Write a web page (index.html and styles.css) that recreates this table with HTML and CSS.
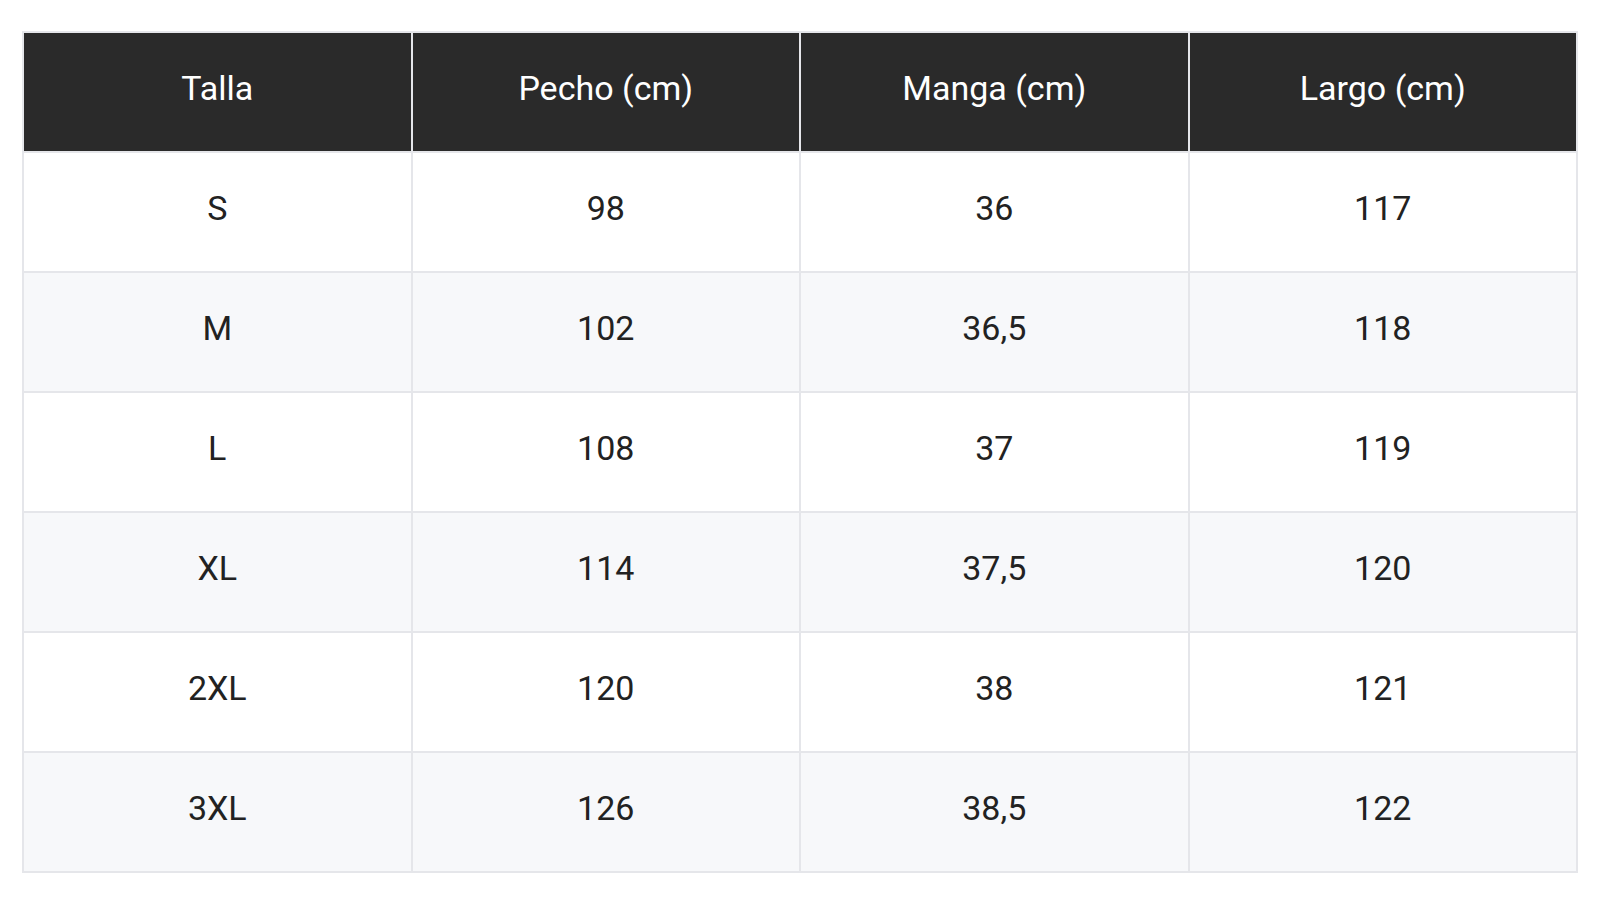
FILE: index.html
```html
<!DOCTYPE html>
<html lang="es">
<head>
<meta charset="utf-8">
<title>Tabla de tallas</title>
<link rel="stylesheet" href="styles.css">
</head>
<body>
<div class="wrap">
<table class="sizes">
  <thead>
    <tr><th>Talla</th><th>Pecho (cm)</th><th>Manga (cm)</th><th>Largo (cm)</th></tr>
  </thead>
  <tbody>
    <tr><td>S</td><td>98</td><td>36</td><td>117</td></tr>
    <tr><td>M</td><td>102</td><td>36,5</td><td>118</td></tr>
    <tr><td>L</td><td>108</td><td>37</td><td>119</td></tr>
    <tr><td>XL</td><td>114</td><td>37,5</td><td>120</td></tr>
    <tr><td>2XL</td><td>120</td><td>38</td><td>121</td></tr>
    <tr><td>3XL</td><td>126</td><td>38,5</td><td>122</td></tr>
  </tbody>
</table>
</div>
</body>
</html>
```
FILE: styles.css
```css
html, body {
  margin: 0;
  padding: 0;
  background: #ffffff;
}
.wrap {
  padding: 31px 22px;
}
.sizes {
  width: 1556px;
  border-collapse: separate;
  border-spacing: 2px;
  background: #e5e6ea;
  table-layout: fixed;
  font-family: Roboto, "Liberation Sans", sans-serif;
  font-size: 34px;
}
.sizes th,
.sizes td {
  height: 118px;
  box-sizing: border-box;
  padding: 0 0 8px 0;
  text-align: center;
  vertical-align: middle;
}
.sizes th {
  background: #2a2a2a;
  color: #ffffff;
  font-weight: 400;
}
.sizes td {
  background: #ffffff;
  color: #222222;
}
.sizes tbody tr:nth-child(even) td {
  background: #f7f8fa;
}
```
